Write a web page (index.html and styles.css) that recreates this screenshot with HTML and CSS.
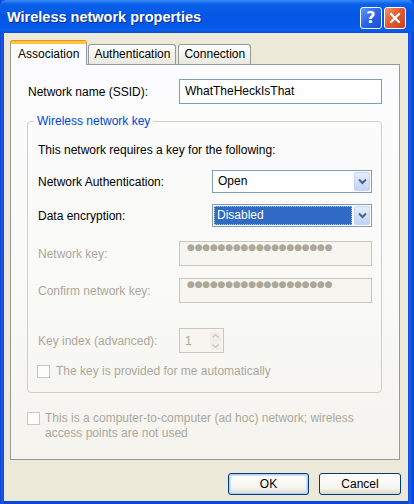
FILE: index.html
```html
<!DOCTYPE html>
<html lang="en">
<head>
    <meta charset="UTF-8">
    <meta name="viewport" content="width=device-width, initial-scale=1.0">
    <title>Wireless network properties</title>
    <link rel="stylesheet" href="styles.css">
</head>
<body>
    <div class="window">
        <div class="titlebar">
            <span class="title">Wireless network properties</span>
            <div class="caption-buttons">
                <span class="cap-btn help">?</span>
                <span class="cap-btn close">
                    <svg width="12" height="12" viewBox="0 0 12 12"><path d="M2 2 L10 10 M10 2 L2 10" stroke="#fff" stroke-width="2.4" stroke-linecap="round"/></svg>
                </span>
            </div>
        </div>

        <div class="client">
            <div class="tabs">
                <span class="tab active">Association</span>
                <span class="tab">Authentication</span>
                <span class="tab">Connection</span>
            </div>

            <div class="panel">
                <div class="row">
                    <label class="lbl lbl-ssid">Network name (SSID):</label>
                    <div class="textbox ssid">WhatTheHeckIsThat</div>
                </div>

                <fieldset class="group">
                    <legend>Wireless network key</legend>
                    <p class="intro">This network requires a key for the following:</p>

                    <div class="row row-auth">
                        <label class="lbl lbl-wide">Network Authentication:</label>
                        <div class="combo">
                            <span class="combo-value">Open</span>
                            <span class="combo-arrow"><svg width="9" height="7" viewBox="0 0 9 7"><path d="M1 1.5 L4.5 5 L8 1.5" fill="none" stroke="#4d6185" stroke-width="2"/></svg></span>
                        </div>
                    </div>

                    <div class="row row-enc">
                        <label class="lbl lbl-wide">Data encryption:</label>
                        <div class="combo">
                            <span class="combo-value selected">Disabled</span>
                            <span class="combo-arrow"><svg width="9" height="7" viewBox="0 0 9 7"><path d="M1 1.5 L4.5 5 L8 1.5" fill="none" stroke="#4d6185" stroke-width="2"/></svg></span>
                        </div>
                    </div>

                    <div class="row row-key">
                        <label class="lbl lbl-key disabled">Network key:</label>
                        <div class="textbox key">●●●●●●●●●●●●●●●●●●●</div>
                    </div>

                    <div class="row row-confirm">
                        <label class="lbl lbl-key disabled">Confirm network key:</label>
                        <div class="textbox key">●●●●●●●●●●●●●●●●●●●</div>
                    </div>

                    <div class="row row-index">
                        <label class="lbl lbl-key disabled">Key index (advanced):</label>
                        <div class="spinner">
                            <span class="spin-value">1</span>
                            <span class="spin-arrows">
                                <svg width="7" height="4" viewBox="0 0 7 4"><path d="M0.5 3.5 L3.5 0.5 L6.5 3.5" fill="none" stroke="#c9c7ba" stroke-width="1.2"/></svg>
                                <svg width="7" height="4" viewBox="0 0 7 4"><path d="M0.5 0.5 L3.5 3.5 L6.5 0.5" fill="none" stroke="#c9c7ba" stroke-width="1.2"/></svg>
                            </span>
                        </div>
                    </div>

                    <div class="check row-auto disabled">
                        <span class="box"></span>
                        <span>The key is provided for me automatically</span>
                    </div>
                </fieldset>

                <div class="check adhoc disabled">
                    <span class="box"></span>
                    <span>This is a computer-to-computer (ad hoc) network; wireless<br>access points are not used</span>
                </div>
            </div>

            <div class="buttons">
                <button class="btn default">OK</button>
                <button class="btn">Cancel</button>
            </div>
        </div>
    </div>
</body>
</html>
```

FILE: styles.css
```css
body {
    margin: 0;
    font-family: "Liberation Sans", Arial, sans-serif;
    font-size: 12px;
    color: #000;
    background: #fff;
}

.window {
    width: 414px;
    height: 504px;
    display: flex;
    flex-direction: column;
    background: linear-gradient(to right, #0a3fcf 0, #1b5be8 2px, #0a47d6 4px, #0a47d6 407px, #1b5be8 410px, #0a3fcf 414px);
}

/* title bar */
.titlebar {
    height: 33px;
    flex-shrink: 0;
    display: flex;
    align-items: center;
    justify-content: space-between;
    padding: 0 8px 0 7px;
    background: linear-gradient(to bottom, #3b8cf7 0, #0a61ea 4px, #0356e4 16px, #0459e6 26px, #0a5fea 30px, #0650dc 33px);
    border-radius: 6px 6px 0 0;
}

.title {
    color: #fff;
    font-weight: bold;
    font-size: 14.5px;
    text-shadow: 1px 1px 0 #0b2e8f;
    margin-top: 1px;
}

.caption-buttons {
    display: flex;
    gap: 2px;
    margin-top: 2px;
}

.cap-btn {
    width: 20px;
    height: 20px;
    border: 1px solid #fff;
    border-radius: 3px;
    display: flex;
    align-items: center;
    justify-content: center;
    color: #fff;
}

.help {
    background: linear-gradient(135deg, #5f9bfb 0, #2a63e6 50%, #1d4fd4 100%);
    font: bold 16px "DejaVu Sans", sans-serif;
}

.close {
    background: linear-gradient(135deg, #f0976e 0, #e35b31 45%, #c9401c 100%);
}

/* client area */
.client {
    flex: 1;
    display: flex;
    flex-direction: column;
    margin: 0 6px 3px 4px;
    padding: 8px 8px 6px 6px;
    background: #ece9d8;
}

.tabs {
    display: flex;
    align-items: flex-end;
    height: 23px;
    flex-shrink: 0;
}

.tab {
    height: 19px;
    line-height: 19px;
    padding: 0 5px;
    margin-left: 1px;
    border: 1px solid #919b9c;
    border-bottom: none;
    border-radius: 3px 3px 0 0;
    background: linear-gradient(to bottom, #fefefe, #f2f1ea 60%, #e9e8e0);
}

.tab + .tab + .tab {
    margin-left: 2px;
}

.tab.active {
    position: relative;
    z-index: 1;
    height: 21px;
    line-height: 21px;
    margin-left: 0;
    margin-bottom: -1px;
    padding: 0 7px;
    border-top: 3px solid #ffc73c;
    box-shadow: 0 -1px 0 #e68b2c;
    background: #fcfcfe;
}

.panel {
    flex: 1;
    border: 1px solid #919b9c;
    padding: 14px 17px 0 17px;
    background: linear-gradient(to bottom, #fcfcfe 0, #f9f9f6 60%, #f4f3ee 100%);
}

/* rows */
.row {
    display: flex;
    align-items: center;
}

.lbl {
    flex-shrink: 0;
}

.lbl-ssid {
    width: 151px;
}

.lbl-wide {
    width: 174px;
}

.lbl-key {
    width: 141px;
}

.disabled,
.disabled .lbl {
    color: #aca899;
}

.textbox {
    flex: 1;
    height: 23px;
    line-height: 23px;
    padding: 0 5px;
    border: 1px solid #7f9db9;
    background: #fff;
    white-space: nowrap;
}

.textbox.key {
    border-color: #c9c7ba;
    background: #f6f5f0;
    color: #aca899;
    font: 9px "DejaVu Sans", sans-serif;
    letter-spacing: -0.2px;
    padding-left: 7px;
}

/* group box */
.group {
    margin: 9px 0 0 -1px;
    padding: 13px 9px 13px 10px;
    border: 1px solid #d0d0bf;
    border-radius: 4px;
}

.group legend {
    color: #0046d5;
    line-height: 16px;
    padding: 0 3px;
    margin-left: -4px;
}

.intro {
    margin: 0;
    line-height: 16px;
}

.row-auth {
    margin-top: 12px;
}

.row-enc {
    margin-top: 11px;
}

.row-key {
    margin-top: 14px;
}

.row-confirm {
    margin-top: 12px;
}

.row-index {
    margin-top: 25px;
}

.row-auto {
    margin-top: 11px;
}

/* combo boxes */
.combo {
    flex: 1;
    height: 19px;
    display: flex;
    align-items: stretch;
    padding: 1px;
    border: 1px solid #7f9db9;
    background: #fff;
}

.combo-value {
    flex: 1;
    line-height: 19px;
    padding-left: 4px;
}

.combo-value.selected {
    margin-right: 2px;
    padding-left: 2px;
    line-height: 17px;
    color: #fff;
    background: #316ac5;
    border: 1px dotted #c8c4a0;
}

.combo-arrow {
    width: 16px;
    display: flex;
    align-items: center;
    justify-content: center;
    border: 1px solid #c3d3fd;
    border-radius: 2px;
    background: linear-gradient(to bottom, #e6eefc, #c1d3fb);
    box-sizing: border-box;
}

/* spinner */
.spinner {
    width: 36px;
    height: 23px;
    display: flex;
    align-items: center;
    justify-content: space-between;
    padding: 0 2px 0 5px;
    border: 1px solid #c9c7ba;
    background: #f6f5f0;
    color: #aca899;
}

.spin-arrows {
    display: flex;
    flex-direction: column;
    gap: 6px;
    padding: 2px 2px;
    border-radius: 2px;
    background: #efeee8;
}

/* checkboxes */
.check {
    display: flex;
    align-items: flex-start;
    gap: 6px;
    line-height: 15px;
}

.check .box {
    width: 11px;
    height: 11px;
    flex-shrink: 0;
    margin-top: 1px;
    border: 1px solid #cac8bb;
    background: #fdfdfb;
}

.row-auto {
    margin-left: -1px;
}

.adhoc {
    margin: 18px 0 0 -1px;
    gap: 5px;
}

/* buttons */
.buttons {
    display: flex;
    justify-content: flex-end;
    gap: 10px;
    margin: 13px -1px 0 0;
    flex-shrink: 0;
}

.btn {
    width: 82px;
    height: 22px;
    padding: 0;
    font: inherit;
    color: #000;
    border: 1px solid #003c74;
    border-radius: 3px;
    background: linear-gradient(to bottom, #ffffff 0, #f5f4ee 70%, #dcd8cc 100%);
}

.btn.default {
    width: 81px;
    box-shadow: inset 0 0 0 1px #b3cdf6, inset 0 0 0 2px #cfe0fb;
}
```
